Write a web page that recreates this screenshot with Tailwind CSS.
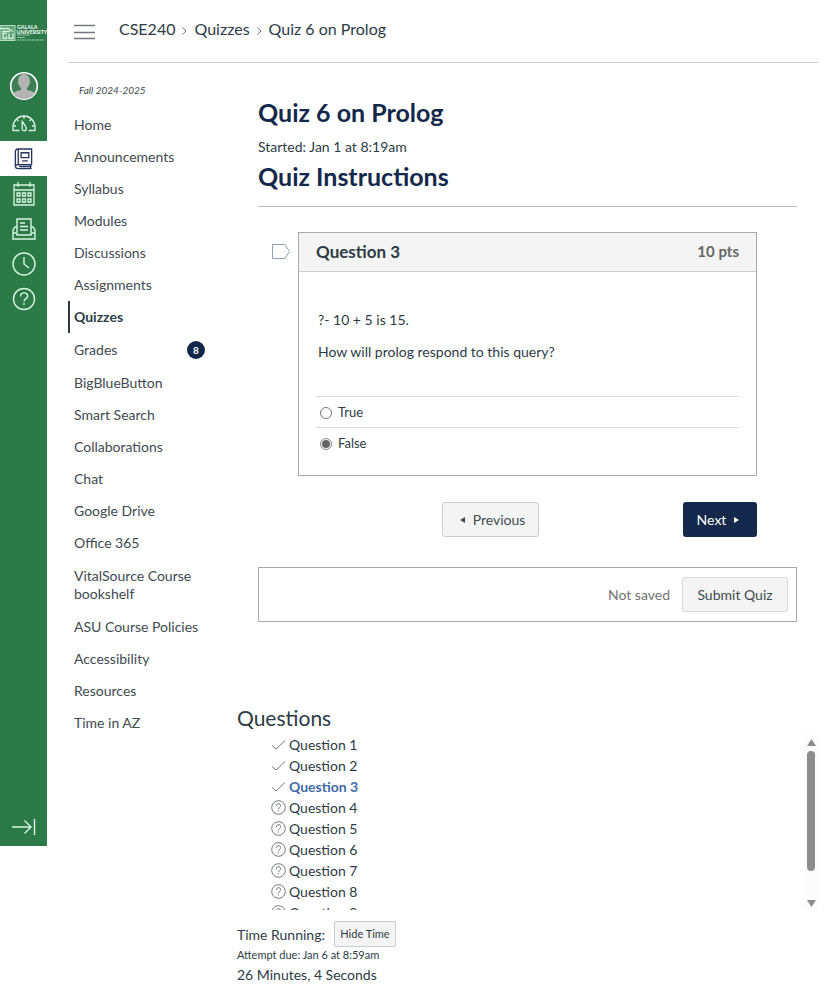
<!DOCTYPE html>
<html lang="en">
<head>
<meta charset="utf-8">
<meta name="viewport" content="width=device-width, initial-scale=1">
<title>Quiz 6 on Prolog</title>
<script src="https://cdn.jsdelivr.net/npm/@tailwindcss/browser@4"></script>
</head>
<body class="flex items-start bg-white font-[Lato,sans-serif] text-[#2d3b45]">
<svg class="hidden" aria-hidden="true">
  <symbol id="check" viewBox="0 0 15 15"><path d="M1 8.5 5 12 14 3.5" fill="none" stroke="currentColor"/></symbol>
  <symbol id="unanswered" viewBox="0 0 15 15"><circle cx="7.5" cy="7.5" r="6.8" fill="none" stroke="currentColor"/><path d="M5.3 6c0-3 4.4-3 4.4-.4C9.7 7.400 7.500 7.200 7.500 9.200M7.500 10.300v1.200" fill="none" stroke="currentColor"/></symbol>
</svg>

<nav aria-label="Global" class="flex h-[84vh] w-[47px] shrink-0 flex-col bg-[#2b7a48] text-white">
  <a href="#" aria-label="Galala University" class="mt-6 block">
    <svg width="47" height="18" viewBox="0 0 47 18" fill="none" stroke="#d9efe0">
      <rect x="0" y="1.500" width="15" height="15" fill="#5fa578" stroke="#b5dcc2"/>
      <path d="M0 4.500h8l5 3M2 7.500h8M6.500 9.500H3v5h3.500v-2.500M9 9.500v5h4v-5" stroke-width="1.300"/>
      <path d="M17 11h13M17 13.500h8" stroke-width=".8" opacity=".8"/><path d="M17 16h27" stroke-width="1" stroke-dasharray="2 .5" opacity=".7"/>
      <g fill="#fff" stroke="none" font-family="Lato, sans-serif" font-weight="700" font-size="5.300"><text x="17" y="5">GALALA</text><text x="16.500" y="9.500">UNIVERSITY</text></g>
    </svg>
  </a>
  <a href="#" aria-label="Account" class="mt-7 flex h-8 items-center justify-center">
    <svg width="30" height="30" viewBox="0 0 30 30"><clipPath id="face"><circle cx="15" cy="15" r="13"/></clipPath><circle cx="15" cy="15" r="13.300" fill="#3f7f56" stroke="#fff" stroke-width="1.600"/><g clip-path="url(#face)" fill="#b3b3b3"><ellipse cx="15" cy="10.500" rx="6" ry="7.500"/><path d="M12 15h6v4c5 1 8 2 9 6v5H3v-5c1-4 4-5 9-6z"/></g></svg>
  </a>
  <a href="#" aria-label="Dashboard" class="flex h-[39px] items-center justify-center pt-[2px]">
    <svg width="24" height="18" viewBox="0 0 24 18" fill="none" stroke="#d9f5e2" stroke-width="1.300"><path d="M7.500 16.500H1v-3.500a11 11 0 0 1 22 0v3.500h-6.500M12 2v3M5 5.500l1.500 1.500M19 5.500 17.500 7M2 12h2M20 12h2"/><path d="M10.200 7.500c2 2.500 4 5 4 7a2 2 0 0 1-4 .5z"/></svg>
  </a>
  <a href="#" aria-label="Courses" class="flex h-[35px] items-center justify-center bg-white text-[#25365f]">
    <svg width="19" height="22" viewBox="0 0 19 23" fill="none" stroke="currentColor" stroke-width="1.400"><path d="M18 17.500V1H3.500A2.500 2.500 0 0 0 1 3.500v15A3 3 0 0 0 4 21.500h14M18 17.500H4A2.500 2.500 0 0 0 1 19M4 1v16M17 17.500v4"/><path d="M7 5h8v5H7zM8 13.500h6" /><path d="M5 19.500h12"/></svg>
  </a>
  <a href="#" aria-label="Calendar" class="flex h-[35px] items-center justify-center">
    <svg width="22" height="24" viewBox="0 0 22 24" fill="none" stroke="#d9f5e2" stroke-width="1.300"><path d="M1 3h20v20H1zM1 8h20M5 0v5M17 0v5"/><path d="M4 11h3v3H4zM9.500 11h3v3h-3zM15 11h3v3h-3zM4 17h3v3H4zM9.500 17h3v3h-3zM15 17h3v3h-3z"/></svg>
  </a>
  <a href="#" aria-label="Inbox" class="flex h-[35px] items-center justify-center">
    <svg width="24" height="22" viewBox="0 0 24 22" fill="none" stroke="#d9f5e2" stroke-width="1.400"><path d="M5 14V1h14v13M5 9H3L1 12v9h22v-9l-2-3h-2M1 15h4v2h14v-2h4M8 5h5M8 8.500h8M8 12h8"/></svg>
  </a>
  <a href="#" aria-label="History" class="flex h-[35px] items-center justify-center">
    <svg width="24" height="24" viewBox="0 0 24 24" fill="none" stroke="#d9f5e2" stroke-width="1.400"><circle cx="12" cy="12" r="11"/><path d="M12 5v7l5 4"/></svg>
  </a>
  <a href="#" aria-label="Help" class="flex h-[35px] items-center justify-center">
    <svg width="24" height="24" viewBox="0 0 24 24" fill="none" stroke="#d9f5e2" stroke-width="1.400"><circle cx="12" cy="12" r="10.500"/><path d="M8.500 9.500c0-5 7.200-4.500 7.200-.6 0 2.800-3.700 2.600-3.700 5.600M12 16v2"/></svg>
  </a>
  <button type="button" aria-label="Expand navigation" class="mt-auto mb-[9px] flex h-5 items-center justify-center">
    <svg width="24" height="18" viewBox="0 0 24 18" fill="none" stroke="#d9f5e2" stroke-width="1.400"><path d="M0 9h19M12.500 2.500 19 9l-6.500 6.500M22.500 1v16"/></svg>
  </button>
</nav>

<div class="min-w-0 flex-1 pr-2 pl-[21px]">
  <header class="flex h-[63px] items-center border-b border-[#c7cdd1] pl-[6px]">
    <button type="button" aria-label="Course menu" class="mr-6 mt-[2px]"><svg width="21" height="16" viewBox="0 0 21 16" stroke="#73777d" stroke-width="1.500"><path d="M0 1.500h21M0 8.500h21M0 14.500h21"/></svg></button>
    <nav aria-label="Breadcrumb" class="mb-1 flex items-center text-[16px] leading-5">
      <a href="#">CSE240</a>
      <svg class="mx-[7px] mt-1" width="5" height="8" viewBox="0 0 5 8" fill="none" stroke="#73777d"><path d="M.5.5 4 4 .5 7.500"/></svg>
      <a href="#">Quizzes</a>
      <svg class="mx-[7px] mt-1" width="5" height="8" viewBox="0 0 5 8" fill="none" stroke="#73777d"><path d="M.5.5 4 4 .5 7.500"/></svg>
      <span>Quiz 6 on Prolog</span>
    </nav>
  </header>

  <div class="flex items-start">
    <nav aria-label="Course" class="w-[137px] shrink-0 pt-[19px] text-[14px] leading-[18px] text-[#414a50]">
      <p class="mb-[11px] pl-[11px] text-[10px] leading-4 italic">Fall 2024-2025</p>
      <ul class="[&_a]:block [&_a]:py-[7px] [&_a]:pl-[6px]">
        <li><a href="#">Home</a></li>
        <li><a href="#">Announcements</a></li>
        <li><a href="#">Syllabus</a></li>
        <li><a href="#">Modules</a></li>
        <li><a href="#">Discussions</a></li>
        <li><a href="#">Assignments</a></li>
        <li class="border-l-2 border-[#2d3b45] font-bold text-[#2d3b45] [&>a]:pl-1"><a href="#" aria-current="page">Quizzes</a></li>
        <li class="flex items-center justify-between py-px"><a href="#">Grades</a><span class="flex size-[18px] items-center justify-center rounded-full bg-[#14284b] text-[10px] leading-none font-bold text-white">8</span></li>
        <li><a href="#">BigBlueButton</a></li>
        <li><a href="#">Smart Search</a></li>
        <li><a href="#">Collaborations</a></li>
        <li><a href="#">Chat</a></li>
        <li><a href="#">Google Drive</a></li>
        <li><a href="#">Office 365</a></li>
        <li class="py-px"><a href="#">VitalSource Course bookshelf</a></li>
        <li><a href="#">ASU Course Policies</a></li>
        <li><a href="#">Accessibility</a></li>
        <li><a href="#">Resources</a></li>
        <li><a href="#">Time in AZ</a></li>
      </ul>
    </nav>

    <div class="min-w-0 flex-1 pl-8">
      <main class="pt-[31px] pr-[21px] pl-[21px]">
        <h1 class="text-[25px] leading-9 font-bold text-[#14284b]">Quiz 6 on Prolog</h1>
        <p class="mt-2 text-[14px] leading-[18px]">Started: Jan 1 at 8:19am</p>
        <h2 class="mt-[2px] border-b border-[#bcbcbc] pb-3 text-[25px] leading-9 font-bold text-[#14284b]">Quiz Instructions</h2>

        <form class="pt-[25px]">
          <div class="flex items-start pr-10 pl-[14px]">
            <button type="button" aria-label="Flag question" class="mt-3 mr-2 shrink-0"><svg width="18" height="15" viewBox="0 0 18 15" fill="none" stroke="#8fa0b0"><path d="M.5.500h12.500l4.500 7-4.500 7H.5z"/></svg></button>
            <section class="flex-1 border border-[#aaa]">
              <div class="flex h-[39px] items-center justify-between border-b border-[#c7cdd1] bg-[#f4f4f4] px-[17px] pb-px font-bold">
                <h3 class="text-[17px]">Question 3</h3><span class="text-[15px] text-[#666]">10 pts</span>
              </div>
              <div class="px-[17px] pt-[39px] pb-[17px] text-[14px] leading-[18px]">
                <p class="pl-[2px]">?- 10 + 5 is 15.</p>
                <p class="mt-[14px] mb-[35px] pl-[2px]">How will prolog respond to this query?</p>
                <label class="flex h-[31px] items-center border-t border-[#ddd] pl-1 text-[13px]"><input type="radio" name="answer" class="mt-[2px] mr-[6px] size-3 appearance-none rounded-full border border-[#767676] bg-white">True</label>
                <label class="flex h-[31px] items-center border-t border-[#ddd] pl-1 text-[13px]"><input type="radio" name="answer" checked class="mt-[2px] mr-[6px] size-3 appearance-none rounded-full border border-[#888] bg-white checked:bg-[#666] checked:bg-clip-content checked:p-px">False</label>
              </div>
            </section>
          </div>
          <div class="mt-[26px] flex justify-between pr-10 pl-[184px] text-[14px]">
            <button type="button" class="flex h-[35px] w-[97px] items-center justify-center gap-2 rounded-[3px] border border-[#c7cdd1] bg-[#f4f4f4] pl-1 text-[#414a50]"><svg width="5" height="6" viewBox="0 0 5 6" fill="currentColor"><path d="M5 0v6L0 3z"/></svg>Previous</button>
            <button type="button" class="flex h-[35px] w-[74px] items-center justify-center gap-2 rounded-[3px] bg-[#14284b] pr-1 text-white">Next<svg width="5" height="6" viewBox="0 0 5 6" fill="currentColor"><path d="M0 0v6l5-3z"/></svg></button>
          </div>
          <div class="mt-[30px] flex h-[55px] items-center justify-end gap-3 border border-[#aaa] pr-2 text-[14px]">
            <span class="text-[#737373]">Not saved</span>
            <button type="submit" class="h-[35px] w-[106px] rounded-[3px] border border-[#d5d9dc] bg-[#f4f4f4] text-[#414a50]">Submit Quiz</button>
          </div>
        </form>
      </main>

      <aside class="mt-[84px]">
        <h2 class="text-[21px] leading-6">Questions</h2>
        <div class="mt-1 flex h-[176px] justify-between">
          <ul class="min-w-0 flex-1 overflow-y-auto pl-[34px] text-[14px] leading-[21px] [scrollbar-width:none] [&_a]:flex [&_a]:items-center [&_a]:gap-[3px] [&_svg]:size-[15px] [&_svg]:text-[#73777d]">
            <li><a href="#"><svg><use href="#check"/></svg>Question 1</a></li>
            <li><a href="#"><svg><use href="#check"/></svg>Question 2</a></li>
            <li><a href="#" class="font-bold text-[#3f6aa8]"><svg><use href="#check"/></svg>Question 3</a></li>
            <li><a href="#"><svg><use href="#unanswered"/></svg>Question 4</a></li>
            <li><a href="#"><svg><use href="#unanswered"/></svg>Question 5</a></li>
            <li><a href="#"><svg><use href="#unanswered"/></svg>Question 6</a></li>
            <li><a href="#"><svg><use href="#unanswered"/></svg>Question 7</a></li>
            <li><a href="#"><svg><use href="#unanswered"/></svg>Question 8</a></li>
            <li><a href="#"><svg><use href="#unanswered"/></svg>Question 9</a></li>
          </ul>
          <div aria-hidden="true" class="flex w-[14px] flex-col items-center bg-[#fcfcfc] pt-[5px] pb-[3px] text-[#8c8c8c]">
            <svg width="9" height="7" viewBox="0 0 9 7" fill="currentColor"><path d="M4.500 0 9 7H0z"/></svg>
            <div class="mt-[5px] h-[120px] w-2 rounded-full bg-[#8c8c8c]"></div>
            <svg class="mt-auto" width="9" height="7" viewBox="0 0 9 7" fill="currentColor"><path d="M0 0h9L4.500 7z"/></svg>
          </div>
        </div>
        <div class="mt-[11px] flex items-center gap-[9px] text-[14px]">Time Running:<button type="button" class="h-[26px] w-[62px] rounded-[2px] border border-[#c7cdd1] bg-[#f4f4f4] text-[11px]">Hide Time</button></div>
        <p class="text-[11px] leading-4">Attempt due: Jan 6 at 8:59am</p>
        <p class="mt-[2px] text-[14px] leading-5">26 Minutes, 4 Seconds</p>
      </aside>
    </div>
  </div>
</div>
</body>
</html>
